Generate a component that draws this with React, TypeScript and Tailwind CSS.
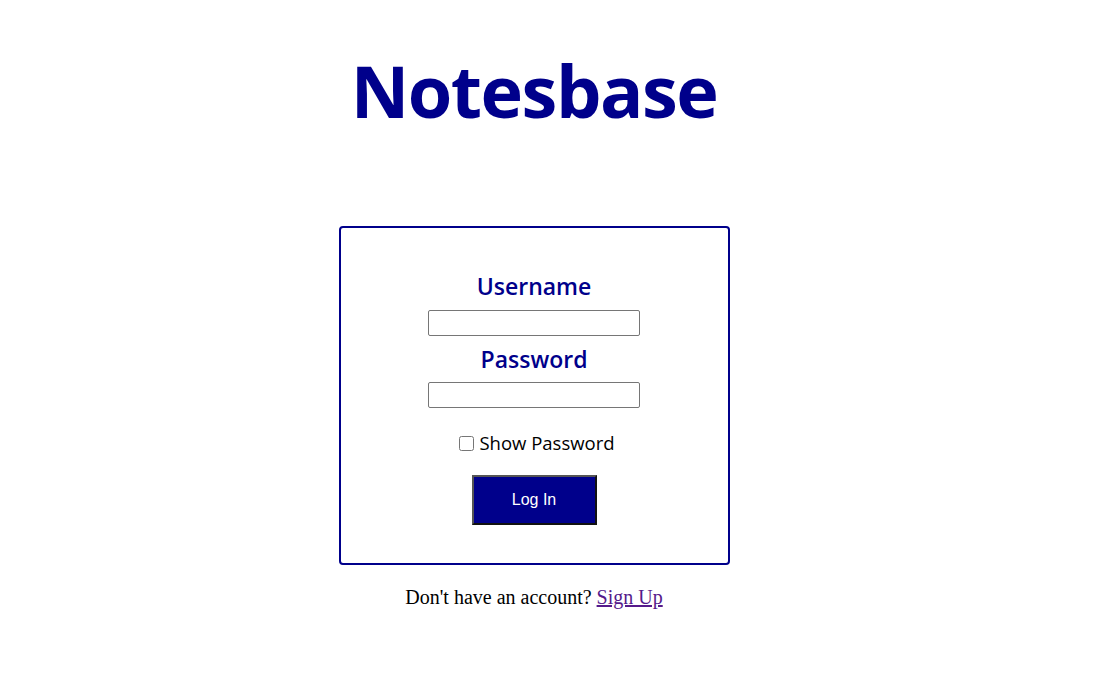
import React from "react";

export default function App() {
  return (
    <div className="w-[1068px] min-h-[688px] bg-white flex flex-col items-center">
      <h1 className="mt-[42px] text-[72px] leading-[96px] font-bold text-[#00008b] font-['Open_Sans',sans-serif] tracking-[-1.5px]">
        Notesbase
      </h1>
      <div className="mt-[88px] w-[391px] h-[339px] border-2 border-[#00008b] rounded-[4px] flex flex-col items-center pt-[43px] font-['Open_Sans',sans-serif]">
        <label className="text-[23px] leading-[30px] font-semibold text-[#00008b]">Username</label>
        <input type="text" className="mt-[9px] w-[212px] h-[26px] border border-[#767676] rounded-[2px] bg-white" />
        <label className="mt-[8px] text-[23px] leading-[30px] font-semibold text-[#00008b]">Password</label>
        <input type="password" className="mt-[8px] w-[212px] h-[26px] border border-[#767676] rounded-[2px] bg-white" />
        <div className="mt-[24px] ml-[6px] h-[22px] flex items-center">
          <input type="checkbox" className="w-[15px] h-[15px] m-0 mr-[5px]" />
          <span className="text-[18.5px] leading-[22px] text-black">Show Password</span>
        </div>
        <button className="mt-[21px] w-[125px] h-[50px] bg-[#00008b] text-white text-[16px] font-['Liberation_Sans',Arial,sans-serif] border-2 border-t-[#555] border-l-[#555] border-b-[#111] border-r-[#111]">
          Log In
        </button>
      </div>
      <p className="mt-[20px] text-[20px] leading-[24px] font-['Liberation_Serif',serif] text-black">
        Don't have an account?{" "}
        <a href="#" className="text-[#551a8b] underline">Sign Up</a>
      </p>
    </div>
  );
}
